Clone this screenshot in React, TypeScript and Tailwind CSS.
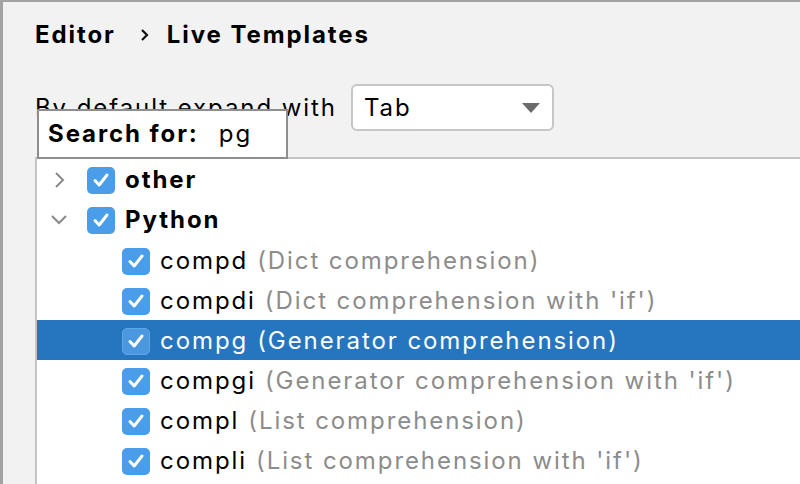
import React from "react";

const font = { fontFamily: "Inter, 'Liberation Sans', sans-serif" };

function Check({ selected = false }: { selected?: boolean }) {
  return (
    <div
      className={
        "w-[28px] h-[27px] rounded-[5px] flex items-center justify-center shrink-0 " +
        (selected ? "bg-[#4b98e0] border border-[#5fa6e8]" : "bg-[#4a9de8]")
      }
    >
      <svg width="18" height="16" viewBox="0 0 18 16">
        <path d="M3 8.5 L7.2 13 L15 3" fill="none" stroke="white" strokeWidth="3" strokeLinecap="round" strokeLinejoin="round" />
      </svg>
    </div>
  );
}

function ChevronRight() {
  return (
    <svg width="12" height="18" viewBox="0 0 12 18">
      <path d="M2 2 L9 9 L2 16" fill="none" stroke="#8a8a8a" strokeWidth="2" />
    </svg>
  );
}

function ChevronDown() {
  return (
    <svg width="18" height="12" viewBox="0 0 18 12">
      <path d="M2 2 L9 9 L16 2" fill="none" stroke="#8a8a8a" strokeWidth="2" />
    </svg>
  );
}

const items: [string, string][] = [
  ["compd", "(Dict comprehension)"],
  ["compdi", "(Dict comprehension with 'if')"],
  ["compg", "(Generator comprehension)"],
  ["compgi", "(Generator comprehension with 'if')"],
  ["compl", "(List comprehension)"],
  ["compli", "(List comprehension with 'if')"],
];

export default function App() {
  return (
    <div
      className="relative w-[800px] h-[484px] overflow-hidden bg-[#f2f2f2] border-t-2 border-l-[3px] border-[#a3a3a3] flex flex-col text-[24px] tracking-[0.08em] text-black"
      style={font}
    >
      <div className="pl-[32px] pt-[15px] h-[36px] flex items-center font-bold box-content">
        <span>Editor</span>
        <svg className="ml-[24px] mr-[18px]" width="9" height="14" viewBox="0 0 9 14">
          <path d="M2 2 L7 7 L2 12" fill="none" stroke="#111" strokeWidth="2.2" />
        </svg>
        <span>Live Templates</span>
      </div>
      <div className="pl-[32px] mt-[31px] flex items-center h-[47px]">
        <span>By default expand with</span>
        <div className="ml-[14px] w-[203px] h-[47px] bg-white border-2 border-[#c6c6c6] rounded-[6px] flex items-center pl-[11px] pr-[12px] justify-between">
          <span>Tab</span>
          <svg width="18" height="10" viewBox="0 0 18 10">
            <path d="M0 0 L18 0 L9 10 Z" fill="#6b6b6b" />
          </svg>
        </div>
      </div>
      <div className="ml-[32px] mt-[26px] flex-1 bg-white border-t-2 border-l-2 border-[#c4c4c4] pt-[1px]">
        <div className="h-[40px] flex items-center">
          <div className="w-[50px] pl-[17px] flex items-center"><ChevronRight /></div>
          <Check />
          <span className="ml-[10px] font-bold">other</span>
        </div>
        <div className="h-[40px] flex items-center">
          <div className="w-[50px] pl-[13px] flex items-center"><ChevronDown /></div>
          <Check />
          <span className="ml-[10px] font-bold">Python</span>
        </div>
        {items.map(([k, d]) => {
          const sel = k === "compg";
          return (
            <div key={k} className={"h-[40px] flex items-center pl-[85px] pt-[2px] " + (sel ? "bg-[#2675bf]" : "")}>
              <Check selected={sel} />
              <span className={"ml-[10px] " + (sel ? "text-white" : "text-black")}>{k}</span>
              <span className={"ml-[9px] " + (sel ? "text-white" : "text-[#8c8c8c]")}>{d}</span>
            </div>
          );
        })}
      </div>
      <div className="absolute left-[34px] top-[107px] w-[251px] h-[50px] bg-white border-2 border-[#8e8e8e] flex items-center pl-[9px]">
        <span className="font-bold">Search for:</span>
        <span className="ml-[20px]">pg</span>
      </div>
    </div>
  );
}
